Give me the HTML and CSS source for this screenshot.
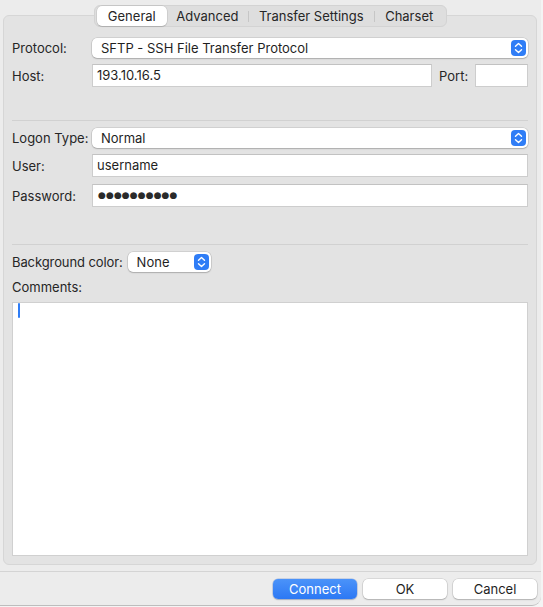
FILE: index.html
```html
<!DOCTYPE html>
<html>
<head>
<meta charset="utf-8">
<link rel="stylesheet" href="styles.css">
</head>
<body>
<div class="window">
  <div class="tabs">
    <div class="tab tab-general active">General</div>
    <div class="tab tab-advanced">Advanced</div>
    <div class="tab tab-transfer sep-left">Transfer Settings</div>
    <div class="tab tab-charset sep-left">Charset</div>
  </div>
  <div class="panel">
    <div class="row">
      <span class="label">Protocol:</span>
      <div class="select grow">
        <span class="select-text">SFTP - SSH File Transfer Protocol</span>
        <svg class="stepper" width="15" height="16" viewBox="0 0 15 16"><rect x="0" y="0" width="15" height="16" rx="4" fill="#2f7df6"/><path d="M4.5 6.2 L7.5 3.4 L10.5 6.2" fill="none" stroke="#fff" stroke-width="1.4" stroke-linecap="round" stroke-linejoin="round"/><path d="M4.5 9.8 L7.5 12.6 L10.5 9.8" fill="none" stroke="#fff" stroke-width="1.4" stroke-linecap="round" stroke-linejoin="round"/></svg>
      </div>
    </div>
    <div class="row row-field">
      <span class="label">Host:</span>
      <div class="input host">193.10.16.5</div>
      <span class="port-label">Port:</span>
      <div class="input port"></div>
    </div>
    <div class="divider first-divider"></div>
    <div class="row">
      <span class="label">Logon Type:</span>
      <div class="select grow">
        <span class="select-text">Normal</span>
        <svg class="stepper" width="15" height="16" viewBox="0 0 15 16"><rect x="0" y="0" width="15" height="16" rx="4" fill="#2f7df6"/><path d="M4.5 6.2 L7.5 3.4 L10.5 6.2" fill="none" stroke="#fff" stroke-width="1.4" stroke-linecap="round" stroke-linejoin="round"/><path d="M4.5 9.8 L7.5 12.6 L10.5 9.8" fill="none" stroke="#fff" stroke-width="1.4" stroke-linecap="round" stroke-linejoin="round"/></svg>
      </div>
    </div>
    <div class="row row-field">
      <span class="label">User:</span>
      <div class="input grow">username</div>
    </div>
    <div class="row row-field row-pass">
      <span class="label">Password:</span>
      <div class="input grow password">&#9679;&#9679;&#9679;&#9679;&#9679;&#9679;&#9679;&#9679;&#9679;&#9679;</div>
    </div>
    <div class="divider second-divider"></div>
    <div class="row bg-row">
      <span class="bg-label">Background color:</span>
      <div class="select small">
        <span class="select-text">None</span>
        <svg class="stepper" width="15" height="16" viewBox="0 0 15 16"><rect x="0" y="0" width="15" height="16" rx="4" fill="#2f7df6"/><path d="M4.5 6.2 L7.5 3.4 L10.5 6.2" fill="none" stroke="#fff" stroke-width="1.4" stroke-linecap="round" stroke-linejoin="round"/><path d="M4.5 9.8 L7.5 12.6 L10.5 9.8" fill="none" stroke="#fff" stroke-width="1.4" stroke-linecap="round" stroke-linejoin="round"/></svg>
      </div>
    </div>
    <div class="comments-label">Comments:</div>
    <div class="textarea"><span class="caret"></span></div>
  </div>
  <div class="footer">
    <div class="btn primary">Connect</div>
    <div class="btn">OK</div>
    <div class="btn">Cancel</div>
  </div>
</div>
</body>
</html>
```

FILE: styles.css
```css
* { box-sizing: border-box; }
html, body { margin: 0; padding: 0; }
body {
  background: #f4f4f4;
  font-family: "Inter", "Liberation Sans", sans-serif;
  font-size: 13px;
  color: #262626;
  width: 543px;
  height: 607px;
  overflow: hidden;
}
.window {
  width: 541px;
  height: 606px;
  background: #ececec;
  border-bottom: 1px solid #bdbdbd;
  border-bottom-right-radius: 9px;
  padding-top: 5px;
}
.tabs {
  position: relative;
  z-index: 2;
  display: flex;
  width: 353px;
  height: 22px;
  margin-left: 94px;
  padding: 1px 2px;
  background: #dedede;
  border: 1px solid #d3d3d3;
  border-radius: 6px;
}
.tab {
  height: 20px;
  margin-top: -1px;
  line-height: 20px;
  text-align: center;
  color: #262626;
  position: relative;
}
.tab-general { width: 70px; }
.tab-advanced { width: 82px; }
.tab-transfer { width: 127px; }
.tab-charset { width: 70px; }
.tab.active {
  background: #fff;
  border-radius: 5px;
  box-shadow: 0 0 0 0.5px rgba(0,0,0,0.12), 0 1px 1px rgba(0,0,0,0.12);
}
.sep-left::before {
  content: "";
  position: absolute;
  left: 0;
  top: 5px;
  width: 1px;
  height: 11px;
  background: #c6c6c6;
}
.panel {
  margin-top: -12px;
  margin-left: 3px;
  width: 534px;
  height: 550px;
  background: #e3e3e3;
  border: 1px solid #d6d6d6;
  border-radius: 6px;
  padding: 22px 8px 8px 8px;
}
.row {
  display: flex;
  align-items: center;
  height: 20px;
}
.row-field {
  height: 23px;
  margin-top: 6px;
}
.row-pass { margin-top: 7px; }
.label {
  width: 80px;
  flex: none;
}
.grow { flex: 1; }
.select {
  height: 20px;
  background: #fff;
  border-radius: 5px;
  box-shadow: 0 0 0 0.5px rgba(0,0,0,0.16), 0 1px 1.5px rgba(0,0,0,0.18);
  display: flex;
  align-items: center;
  padding-left: 9px;
  padding-right: 2px;
}
.select-text { flex: 1; color: #1f1f1f; }
.stepper { flex: none; display: block; }
.select.small { width: 83px; }
.input {
  height: 23px;
  background: #fff;
  border: 1px solid #cdcdcd;
  border-top-color: #c2c2c2;
  padding-left: 4px;
  line-height: 21px;
  color: #1f1f1f;
}
.host { width: 340px; }
.port-label { margin-left: 7px; width: 36px; }
.port { width: 53px; }
.password {
  font-family: "DejaVu Sans", sans-serif;
  font-size: 9px;
  letter-spacing: 0.1px;
  color: #2a2a2a;
  padding-left: 5px;
}
.divider {
  height: 1px;
  background: #d1d1d1;
}
.first-divider { margin-top: 33px; margin-bottom: 7px; }
.second-divider { margin-top: 37px; margin-bottom: 7px; }
.bg-row { gap: 5px; }
.bg-label { letter-spacing: -0.1px; }
.comments-label {
  margin-top: 7px;
  line-height: 16px;
  height: 16px;
  margin-bottom: 7px;
}
.textarea {
  height: 254px;
  background: #fff;
  border: 1px solid #d0d0d0;
  padding: 0 0 0 5px;
}
.caret {
  display: block;
  width: 2px;
  height: 15px;
  background: #2f7df6;
  border-radius: 1px;
}
.footer {
  margin-top: 6px;
  border-top: 1px solid #d4d4d4;
  padding: 7px 4px 0 0;
  display: flex;
  justify-content: flex-end;
  gap: 6px;
}
.btn {
  width: 84px;
  height: 20px;
  line-height: 20px;
  text-align: center;
  background: #fff;
  border-radius: 5px;
  box-shadow: 0 0 0 0.5px rgba(0,0,0,0.16), 0 1px 1.5px rgba(0,0,0,0.18);
  color: #1f1f1f;
}
.btn.primary {
  background: linear-gradient(#4b93f9, #2c78f4);
  color: #fff;
  box-shadow: 0 0 0 0.5px rgba(0,60,180,0.3), 0 1px 1.5px rgba(0,0,0,0.18);
}
```
